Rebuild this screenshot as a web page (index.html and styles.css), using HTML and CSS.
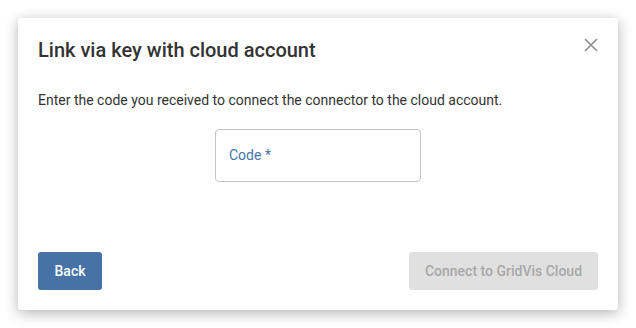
FILE: index.html
```html
<!DOCTYPE html>
<html>
	<head>
		<meta charset="utf-8">
		<title>Link via key</title>
		<link rel="stylesheet" href="styles.css">
	</head>
	<body>
		<div class="dialog">
			<div class="head">
				<h2>Link via key with cloud account</h2>
				<button class="close" aria-label="close">
					<svg width="14" height="14" viewBox="0 0 14 14"><path d="M1 1L13 13M13 1L1 13" stroke="#8f8f8f" stroke-width="1.6" fill="none"/></svg>
				</button>
			</div>
			<p class="intro">Enter the code you received to connect the connector to the cloud account.</p>
			<div class="field">
				<label class="input">Code *</label>
			</div>
			<div class="actions">
				<button class="btn primary">Back</button>
				<button class="btn disabled">Connect to GridVis Cloud</button>
			</div>
		</div>
	</body>
</html>
```

FILE: styles.css
```css
* {
	margin: 0;
	padding: 0;
	box-sizing: border-box;
}

html,
body {
	width: 100%;
	height: 100%;
	background: #fff;
}

body {
	padding: 18px;
	font-family: Roboto, "Liberation Sans", sans-serif;
	color: #333;
}

.dialog {
	width: 600px;
	height: 292px;
	background: #fff;
	border-radius: 3px;
	box-shadow: 0 3px 14px rgba(0, 0, 0, 0.3);
	padding: 18px 20px 20px;
	display: flex;
	flex-direction: column;
}

.head {
	display: flex;
	justify-content: space-between;
	align-items: flex-start;
}

.head h2 {
	font-size: 20px;
	font-weight: 500;
	line-height: 28px;
}

.close {
	border: none;
	background: none;
	margin-top: 2px;
	width: 14px;
	height: 14px;
	display: flex;
}

.intro {
	font-size: 14px;
	line-height: 20px;
	margin-top: 26px;
}

.field {
	display: flex;
	justify-content: center;
	margin-top: 19px;
}

.input {
	width: 206px;
	height: 53px;
	border: 1px solid #c4c4c4;
	border-radius: 4px;
	padding: 0 13px 1px;
	display: flex;
	align-items: center;
	font-size: 14px;
	color: #4a75a8;
}

.actions {
	margin-top: auto;
	display: flex;
	justify-content: space-between;
}

.btn {
	height: 38px;
	border: none;
	border-radius: 3px;
	font-family: Roboto, "Liberation Sans", sans-serif;
	font-size: 14px;
	font-weight: 500;
	padding: 0;
	white-space: nowrap;
}

.btn.primary {
	background: #4672a5;
	color: #fff;
	width: 64px;
}

.btn.disabled {
	background: #e0e0e0;
	color: #a8a8a8;
	width: 189px;
}
```
